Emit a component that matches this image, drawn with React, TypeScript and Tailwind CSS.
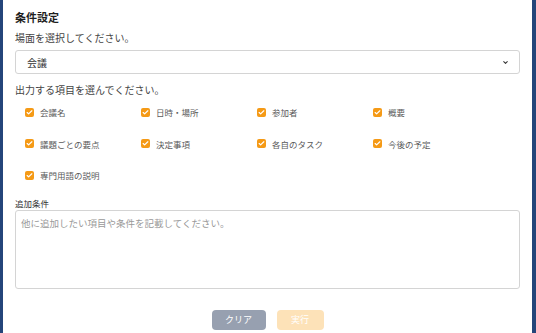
import { Check, ChevronDown } from 'lucide-react';

const items = [
  '会議名',
  '日時・場所',
  '参加者',
  '概要',
  '議題ごとの要点',
  '決定事項',
  '各自のタスク',
  '今後の予定',
  '専門用語の説明',
];

function CheckItem({ label }: { label: string }) {
  return (
    <label className="flex items-center gap-[6px] h-[14px]">
      <span className="w-[9px] h-[9px] rounded-[2px] bg-[#f59a16] flex items-center justify-center">
        <Check className="w-[7px] h-[7px] text-white" strokeWidth={4} />
      </span>
      <span className="text-[8.5px] leading-[14px] text-[#5a5a5a]">{label}</span>
    </label>
  );
}

export default function App() {
  return (
    <div
      className="w-[536px] h-[333px] overflow-hidden bg-white border-l-[3px] border-r-[4px] border-[#24457a]"
      style={{ fontFamily: '"Noto Sans CJK JP", "Noto Sans", sans-serif' }}
    >
      <div className="pl-[12px] pr-[12px] pt-[9px]">
        <h2 className="text-[11px] font-bold text-[#1f1f1f] leading-[16px]">条件設定</h2>
        <p className="mt-[6px] text-[10px] text-[#444] leading-[14px]">場面を選択してください。</p>

        {/* Scene select */}
        <div className="mt-[5px] h-[24px] border border-[#d4d4d4] rounded-[3px] flex items-center justify-between pl-[11px] pr-[10px]">
          <span className="text-[10px] text-[#333]">会議</span>
          <ChevronDown className="w-[7px] h-[7px] text-[#333]" strokeWidth={3.5} />
        </div>

        <p className="mt-[9px] text-[10px] text-[#444] leading-[14px]">出力する項目を選んでください。</p>

        {/* Output items */}
        <div className="mt-[8px] pl-[10px] grid grid-cols-[116px_116px_116px_116px] gap-y-[17.5px]">
          {items.map((item) => (
            <CheckItem key={item} label={item} />
          ))}
        </div>

        <p className="mt-[15px] text-[8.5px] text-[#333] leading-[12px]">追加条件</p>
        <textarea
          className="mt-[1px] block w-full h-[79px] border border-[#d4d4d4] rounded-[3px] px-[5px] py-[5px] text-[9.5px] leading-[14px] resize-none outline-none placeholder:text-[#999]"
          placeholder="他に追加したい項目や条件を記載してください。"
        />

        {/* Actions */}
        <div className="mt-[21px] flex justify-center gap-[11px]">
          <button className="w-[54px] h-[20px] rounded-[4px] bg-[#97a0b0] text-white text-[9px]">
            クリア
          </button>
          <button className="w-[47px] h-[20px] rounded-[4px] bg-[#fde2b8] text-white text-[9px]">
            実行
          </button>
        </div>
      </div>
    </div>
  );
}
